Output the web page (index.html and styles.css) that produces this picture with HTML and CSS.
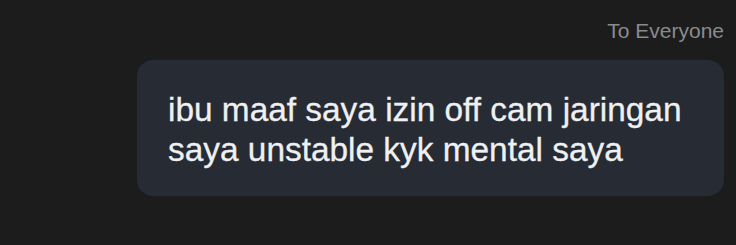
FILE: index.html
```html
<!DOCTYPE html>
<html>
<head>
<meta charset="utf-8">
<link rel="stylesheet" href="styles.css">
</head>
<body>
<div class="chat">
  <div class="meta">To Everyone</div>
  <div class="bubble">
    <p class="msg">ibu maaf saya izin off cam jaringan<br>saya unstable kyk mental saya</p>
  </div>
</div>
</body>
</html>
```

FILE: styles.css
```css
html, body {
  margin: 0;
  padding: 0;
  background: #1c1c1d;
  width: 736px;
  height: 245px;
  overflow: hidden;
}
.chat {
  display: flex;
  flex-direction: column;
  align-items: flex-end;
  padding: 19px 12px 0 137px;
}
.meta {
  font-family: "Liberation Sans", Arial, sans-serif;
  font-size: 21px;
  color: #8a8b8d;
  line-height: 24px;
  margin-bottom: 17px;
}
.bubble {
  align-self: stretch;
  background: #262b34;
  border-radius: 16px;
  padding: 30px 20px 26px 31px;
}
.msg {
  margin: 0;
  font-family: "Liberation Sans", Arial, sans-serif;
  font-size: 33.4px;
  line-height: 40px;
  color: #eef0f2;
  -webkit-text-stroke: 0.3px #eef0f2;
}
```
